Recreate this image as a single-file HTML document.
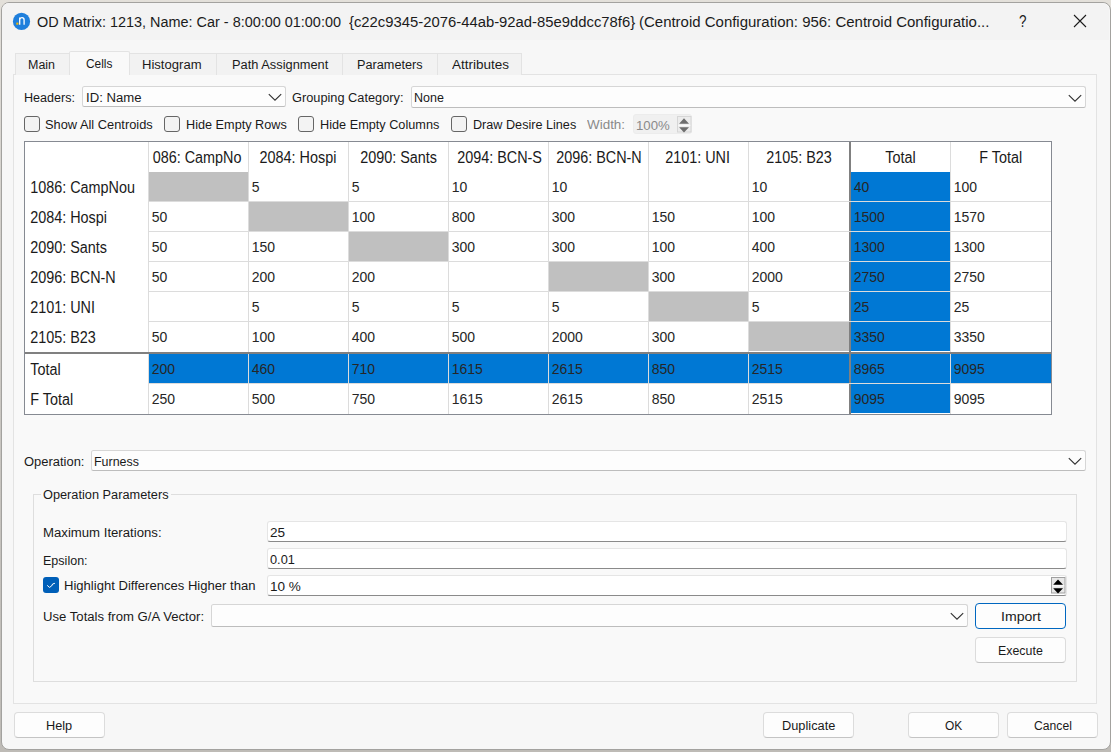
<!DOCTYPE html>
<html><head><meta charset="utf-8"><style>
html,body{margin:0;padding:0;width:1111px;height:752px;overflow:hidden;}
body{position:relative;font-family:"Liberation Sans", sans-serif;}
</style></head><body>
<div style="position:absolute;left:0;top:0;width:1111px;height:752px;background:linear-gradient(#e3e0da,#d2cfca 30%,#c8c5c0 60%,#bebbb6)"></div>
<div style="position:absolute;left:1px;top:2px;width:1108px;height:746px;border:1px solid #a3a29f;border-radius:8px;background:#f7f7f7;overflow:hidden"></div>
<div style="position:absolute;left:2px;top:3px;width:1107px;height:37px;background:#f3f3f3;border-radius:7px 7px 0 0"></div>
<svg style="position:absolute;left:12px;top:12px" width="19" height="19" viewBox="0 0 19 19"><circle cx="9.5" cy="9.4" r="8.6" fill="#1f7fdc"/><rect x="4.3" y="10.6" width="2.1" height="2.1" fill="#f5b800"/><path d="M7.7 12.7 V5.6 M7.7 7.6 Q8.4 5.7 10 5.7 Q12.1 5.7 12.1 7.9 V12.7" stroke="#fff" stroke-width="1.3" fill="none"/></svg>
<div style="position:absolute;left:36.70px;top:14.06px;font-size:14.73px;line-height:17.68px;color:#1b1b1b;white-space:pre;transform:scale(0.9803,1.000);transform-origin:0 13.94px;">OD Matrix: 1213, Name: Car - 8:00:00 01:00:00</div>
<div style="position:absolute;left:349.40px;top:14.06px;font-size:14.73px;line-height:17.68px;color:#1b1b1b;white-space:pre;transform:scale(1.0078,1.000);transform-origin:0 13.94px;">{c22c9345-2076-44ab-92ad-85e9ddcc78f6}</div>
<div style="position:absolute;left:638.80px;top:14.06px;font-size:14.73px;line-height:17.68px;color:#1b1b1b;white-space:pre;transform:scale(1.0173,1.000);transform-origin:0 13.94px;">(Centroid Configuration: 956: Centroid Configuratio...</div>
<div style="position:absolute;left:1018.80px;top:11.91px;font-size:17px;line-height:20.4px;color:#1b1b1b;white-space:pre;transform:scale(0.7911,1.000);transform-origin:0 16.09px;">?</div>
<svg style="position:absolute;left:1073px;top:14px" width="14" height="14" viewBox="0 0 14 14"><path d="M1 1 L13 13 M13 1 L1 13" stroke="#1b1b1b" stroke-width="1.1"/></svg>
<div style="position:absolute;left:13px;top:74px;width:1082px;height:628px;border:1px solid #e3e3e3;background:#f9f9f9"></div>
<div style="position:absolute;left:15px;top:53px;width:54px;height:21px;border:1px solid #e3e3e3;border-bottom:none;background:#f2f2f2"></div>
<div style="position:absolute;left:28.20px;top:57.97px;font-size:12.5px;line-height:15.0px;color:#1a1a1a;white-space:pre;transform:scale(0.9964,1.000);transform-origin:0 11.83px;">Main</div>
<div style="position:absolute;left:69px;top:51px;width:59px;height:23px;border:1px solid #e3e3e3;border-bottom:none;background:#f9f9f9;border-radius:2px 2px 0 0"></div>
<div style="position:absolute;left:85.70px;top:57.37px;font-size:12.5px;line-height:15.0px;color:#1a1a1a;white-space:pre;transform:scale(0.9516,1.000);transform-origin:0 11.83px;">Cells</div>
<div style="position:absolute;left:129px;top:53px;width:86px;height:21px;border:1px solid #e3e3e3;border-bottom:none;background:#f2f2f2"></div>
<div style="position:absolute;left:142.20px;top:57.97px;font-size:12.5px;line-height:15.0px;color:#1a1a1a;white-space:pre;transform:scale(1.0452,1.000);transform-origin:0 11.83px;">Histogram</div>
<div style="position:absolute;left:216px;top:53px;width:125px;height:21px;border:1px solid #e3e3e3;border-bottom:none;background:#f2f2f2"></div>
<div style="position:absolute;left:231.50px;top:57.97px;font-size:12.5px;line-height:15.0px;color:#1a1a1a;white-space:pre;transform:scale(1.0268,1.000);transform-origin:0 11.83px;">Path Assignment</div>
<div style="position:absolute;left:342px;top:53px;width:94px;height:21px;border:1px solid #e3e3e3;border-bottom:none;background:#f2f2f2"></div>
<div style="position:absolute;left:357.20px;top:57.97px;font-size:12.5px;line-height:15.0px;color:#1a1a1a;white-space:pre;transform:scale(1.0156,1.000);transform-origin:0 11.83px;">Parameters</div>
<div style="position:absolute;left:437px;top:53px;width:83px;height:21px;border:1px solid #e3e3e3;border-bottom:none;background:#f2f2f2"></div>
<div style="position:absolute;left:451.90px;top:57.97px;font-size:12.5px;line-height:15.0px;color:#1a1a1a;white-space:pre;transform:scale(1.0808,1.000);transform-origin:0 11.83px;">Attributes</div>
<div style="position:absolute;left:23.60px;top:90.57px;font-size:12.5px;line-height:15.0px;color:#1a1a1a;white-space:pre;transform:scale(1.0053,1.000);transform-origin:0 11.83px;">Headers:</div>
<div style="position:absolute;left:82px;top:86px;width:202px;height:19px;border:1px solid #d6d6d6;border-bottom-color:#bdbdbd;border-radius:2.5px;background:#fdfdfd"></div>
<svg style="position:absolute;left:268px;top:92.2px" width="14" height="10" viewBox="0 0 14 10"><path d="M0.8 2.2 L7 8.2 L13.2 2.2" stroke="#303030" stroke-width="1.1" fill="none"/></svg>
<div style="position:absolute;left:85.70px;top:90.57px;font-size:12.5px;line-height:15.0px;color:#1a1a1a;white-space:pre;transform:scale(1.0522,1.000);transform-origin:0 11.83px;">ID: Name</div>
<div style="position:absolute;left:291.70px;top:90.57px;font-size:12.5px;line-height:15.0px;color:#1a1a1a;white-space:pre;transform:scale(1.0223,1.000);transform-origin:0 11.83px;">Grouping Category:</div>
<div style="position:absolute;left:411px;top:86px;width:673px;height:20px;border:1px solid #d6d6d6;border-bottom-color:#bdbdbd;border-radius:2.5px;background:#fdfdfd"></div>
<svg style="position:absolute;left:1068px;top:92.7px" width="14" height="10" viewBox="0 0 14 10"><path d="M0.8 2.2 L7 8.2 L13.2 2.2" stroke="#303030" stroke-width="1.1" fill="none"/></svg>
<div style="position:absolute;left:413.80px;top:90.57px;font-size:12.5px;line-height:15.0px;color:#1a1a1a;white-space:pre;transform:scale(1.0003,1.000);transform-origin:0 11.83px;">None</div>
<div style="position:absolute;left:24px;top:116px;width:14px;height:14px;border:1px solid #666;border-radius:3px;background:#f3f3f3"></div>
<div style="position:absolute;left:45.20px;top:117.57px;font-size:12.5px;line-height:15.0px;color:#1a1a1a;white-space:pre;transform:scale(1.0267,1.000);transform-origin:0 11.83px;">Show All Centroids</div>
<div style="position:absolute;left:164px;top:116px;width:14px;height:14px;border:1px solid #666;border-radius:3px;background:#f3f3f3"></div>
<div style="position:absolute;left:185.70px;top:117.57px;font-size:12.5px;line-height:15.0px;color:#1a1a1a;white-space:pre;transform:scale(1.0148,1.000);transform-origin:0 11.83px;">Hide Empty Rows</div>
<div style="position:absolute;left:298px;top:116px;width:14px;height:14px;border:1px solid #666;border-radius:3px;background:#f3f3f3"></div>
<div style="position:absolute;left:319.80px;top:117.57px;font-size:12.5px;line-height:15.0px;color:#1a1a1a;white-space:pre;transform:scale(1.0163,1.000);transform-origin:0 11.83px;">Hide Empty Columns</div>
<div style="position:absolute;left:451px;top:116px;width:14px;height:14px;border:1px solid #666;border-radius:3px;background:#f3f3f3"></div>
<div style="position:absolute;left:472.70px;top:117.57px;font-size:12.5px;line-height:15.0px;color:#1a1a1a;white-space:pre;transform:scale(1.0106,1.000);transform-origin:0 11.83px;">Draw Desire Lines</div>
<div style="position:absolute;left:587.20px;top:117.57px;font-size:12.5px;line-height:15.0px;color:#8a8a8a;white-space:pre;transform:scale(1.0744,1.000);transform-origin:0 11.83px;">Width:</div>
<div style="position:absolute;left:633px;top:114px;width:59px;height:20px;background:#f0f0f0;border:1px solid #ececec;border-radius:3px;box-sizing:border-box"></div>
<div style="position:absolute;left:635.80px;top:118.67px;font-size:12.5px;line-height:15.0px;color:#8a8a8a;white-space:pre;transform:scale(1.0554,1.000);transform-origin:0 11.83px;">100%</div>
<svg style="position:absolute;left:676px;top:115px" width="17" height="19" viewBox="0 0 17 19"><rect x="1.5" y="1.5" width="13.5" height="15.5" fill="#ececec" stroke="#d6d6d6"/><path d="M2.2 10.4 H14.3" stroke="#fafafa" stroke-width="1.4"/><path d="M3.1 8.8 L8 3.2 L13 8.8 Z M3.1 12.2 L13 12.2 L8 17.4 Z" fill="#6e6e6e"/></svg>
<div style="position:absolute;left:24px;top:141px;width:1026px;height:272px;border:1px solid #868a92;background:#fff"></div>
<div style="position:absolute;left:149px;top:172px;width:99px;height:29px;background:#c0c0c0"></div>
<div style="position:absolute;left:851px;top:172px;width:99px;height:29px;background:#0078d4"></div>
<div style="position:absolute;left:249px;top:202px;width:99px;height:29px;background:#c0c0c0"></div>
<div style="position:absolute;left:851px;top:202px;width:99px;height:29px;background:#0078d4"></div>
<div style="position:absolute;left:349px;top:232px;width:99px;height:29px;background:#c0c0c0"></div>
<div style="position:absolute;left:851px;top:232px;width:99px;height:29px;background:#0078d4"></div>
<div style="position:absolute;left:549px;top:262px;width:99px;height:29px;background:#c0c0c0"></div>
<div style="position:absolute;left:851px;top:262px;width:99px;height:29px;background:#0078d4"></div>
<div style="position:absolute;left:649px;top:292px;width:99px;height:29px;background:#c0c0c0"></div>
<div style="position:absolute;left:851px;top:292px;width:99px;height:29px;background:#0078d4"></div>
<div style="position:absolute;left:749px;top:322px;width:100px;height:29px;background:#c0c0c0"></div>
<div style="position:absolute;left:851px;top:322px;width:99px;height:29px;background:#0078d4"></div>
<div style="position:absolute;left:149px;top:354px;width:902px;height:29px;background:#0078d4"></div>
<div style="position:absolute;left:851px;top:384px;width:99px;height:29px;background:#0078d4"></div>
<div style="position:absolute;left:148px;top:142px;width:1px;height:272px;background:#dcdcdc"></div>
<div style="position:absolute;left:248px;top:142px;width:1px;height:272px;background:#dcdcdc"></div>
<div style="position:absolute;left:348px;top:142px;width:1px;height:272px;background:#dcdcdc"></div>
<div style="position:absolute;left:448px;top:142px;width:1px;height:272px;background:#dcdcdc"></div>
<div style="position:absolute;left:548px;top:142px;width:1px;height:272px;background:#dcdcdc"></div>
<div style="position:absolute;left:648px;top:142px;width:1px;height:272px;background:#dcdcdc"></div>
<div style="position:absolute;left:748px;top:142px;width:1px;height:272px;background:#dcdcdc"></div>
<div style="position:absolute;left:950px;top:142px;width:1px;height:272px;background:#dcdcdc"></div>
<div style="position:absolute;left:849px;top:142px;width:2px;height:272px;background:#808080"></div>
<div style="position:absolute;left:149px;top:201px;width:902px;height:1px;background:#dcdcdc"></div>
<div style="position:absolute;left:149px;top:231px;width:902px;height:1px;background:#dcdcdc"></div>
<div style="position:absolute;left:149px;top:261px;width:902px;height:1px;background:#dcdcdc"></div>
<div style="position:absolute;left:149px;top:291px;width:902px;height:1px;background:#dcdcdc"></div>
<div style="position:absolute;left:149px;top:321px;width:902px;height:1px;background:#dcdcdc"></div>
<div style="position:absolute;left:149px;top:383px;width:902px;height:1px;background:#dcdcdc"></div>
<div style="position:absolute;left:25px;top:352px;width:1026px;height:2px;background:#808080"></div>
<div style="position:absolute;left:152.70px;top:149.57px;font-size:14.4px;line-height:17.28px;color:#1a1a1a;white-space:pre;transform:scale(1.0000,1.100);transform-origin:0 13.63px;">086: CampNo</div>
<div style="position:absolute;left:259.60px;top:149.57px;font-size:14.4px;line-height:17.28px;color:#1a1a1a;white-space:pre;transform:scale(1.0000,1.100);transform-origin:0 13.63px;">2084: Hospi</div>
<div style="position:absolute;left:360.20px;top:149.57px;font-size:14.4px;line-height:17.28px;color:#1a1a1a;white-space:pre;transform:scale(1.0000,1.100);transform-origin:0 13.63px;">2090: Sants</div>
<div style="position:absolute;left:457.20px;top:149.57px;font-size:14.4px;line-height:17.28px;color:#1a1a1a;white-space:pre;transform:scale(1.0000,1.100);transform-origin:0 13.63px;">2094: BCN-S</div>
<div style="position:absolute;left:556.20px;top:149.57px;font-size:14.4px;line-height:17.28px;color:#1a1a1a;white-space:pre;transform:scale(1.0000,1.100);transform-origin:0 13.63px;">2096: BCN-N</div>
<div style="position:absolute;left:665.20px;top:149.57px;font-size:14.4px;line-height:17.28px;color:#1a1a1a;white-space:pre;transform:scale(1.0000,1.100);transform-origin:0 13.63px;">2101: UNI</div>
<div style="position:absolute;left:766.20px;top:149.57px;font-size:14.4px;line-height:17.28px;color:#1a1a1a;white-space:pre;transform:scale(1.0000,1.100);transform-origin:0 13.63px;">2105: B23</div>
<div style="position:absolute;left:885.20px;top:149.57px;font-size:14.4px;line-height:17.28px;color:#1a1a1a;white-space:pre;transform:scale(1.0000,1.100);transform-origin:0 13.63px;">Total</div>
<div style="position:absolute;left:979.20px;top:149.57px;font-size:14.4px;line-height:17.28px;color:#1a1a1a;white-space:pre;transform:scale(1.0000,1.100);transform-origin:0 13.63px;">F Total</div>
<div style="position:absolute;left:30.20px;top:179.67px;font-size:14.4px;line-height:17.28px;color:#1a1a1a;white-space:pre;transform:scale(1.0000,1.100);transform-origin:0 13.63px;">1086: CampNou</div>
<div style="position:absolute;left:251.70px;top:179.05px;font-size:14px;line-height:16.8px;color:#262626;white-space:pre;transform:scale(1.0000,1.100);transform-origin:0 13.25px;">5</div>
<div style="position:absolute;left:351.70px;top:179.05px;font-size:14px;line-height:16.8px;color:#262626;white-space:pre;transform:scale(1.0000,1.100);transform-origin:0 13.25px;">5</div>
<div style="position:absolute;left:451.70px;top:179.05px;font-size:14px;line-height:16.8px;color:#262626;white-space:pre;transform:scale(1.0000,1.100);transform-origin:0 13.25px;">10</div>
<div style="position:absolute;left:551.70px;top:179.05px;font-size:14px;line-height:16.8px;color:#262626;white-space:pre;transform:scale(1.0000,1.100);transform-origin:0 13.25px;">10</div>
<div style="position:absolute;left:751.70px;top:179.05px;font-size:14px;line-height:16.8px;color:#262626;white-space:pre;transform:scale(1.0000,1.100);transform-origin:0 13.25px;">10</div>
<div style="position:absolute;left:853.70px;top:179.05px;font-size:14px;line-height:16.8px;color:#262626;white-space:pre;transform:scale(1.0000,1.100);transform-origin:0 13.25px;">40</div>
<div style="position:absolute;left:953.70px;top:179.05px;font-size:14px;line-height:16.8px;color:#262626;white-space:pre;transform:scale(1.0000,1.100);transform-origin:0 13.25px;">100</div>
<div style="position:absolute;left:30.20px;top:209.67px;font-size:14.4px;line-height:17.28px;color:#1a1a1a;white-space:pre;transform:scale(1.0000,1.100);transform-origin:0 13.63px;">2084: Hospi</div>
<div style="position:absolute;left:151.70px;top:209.05px;font-size:14px;line-height:16.8px;color:#262626;white-space:pre;transform:scale(1.0000,1.100);transform-origin:0 13.25px;">50</div>
<div style="position:absolute;left:351.70px;top:209.05px;font-size:14px;line-height:16.8px;color:#262626;white-space:pre;transform:scale(1.0000,1.100);transform-origin:0 13.25px;">100</div>
<div style="position:absolute;left:451.70px;top:209.05px;font-size:14px;line-height:16.8px;color:#262626;white-space:pre;transform:scale(1.0000,1.100);transform-origin:0 13.25px;">800</div>
<div style="position:absolute;left:551.70px;top:209.05px;font-size:14px;line-height:16.8px;color:#262626;white-space:pre;transform:scale(1.0000,1.100);transform-origin:0 13.25px;">300</div>
<div style="position:absolute;left:651.70px;top:209.05px;font-size:14px;line-height:16.8px;color:#262626;white-space:pre;transform:scale(1.0000,1.100);transform-origin:0 13.25px;">150</div>
<div style="position:absolute;left:751.70px;top:209.05px;font-size:14px;line-height:16.8px;color:#262626;white-space:pre;transform:scale(1.0000,1.100);transform-origin:0 13.25px;">100</div>
<div style="position:absolute;left:853.70px;top:209.05px;font-size:14px;line-height:16.8px;color:#262626;white-space:pre;transform:scale(1.0000,1.100);transform-origin:0 13.25px;">1500</div>
<div style="position:absolute;left:953.70px;top:209.05px;font-size:14px;line-height:16.8px;color:#262626;white-space:pre;transform:scale(1.0000,1.100);transform-origin:0 13.25px;">1570</div>
<div style="position:absolute;left:30.20px;top:239.67px;font-size:14.4px;line-height:17.28px;color:#1a1a1a;white-space:pre;transform:scale(1.0000,1.100);transform-origin:0 13.63px;">2090: Sants</div>
<div style="position:absolute;left:151.70px;top:239.05px;font-size:14px;line-height:16.8px;color:#262626;white-space:pre;transform:scale(1.0000,1.100);transform-origin:0 13.25px;">50</div>
<div style="position:absolute;left:251.70px;top:239.05px;font-size:14px;line-height:16.8px;color:#262626;white-space:pre;transform:scale(1.0000,1.100);transform-origin:0 13.25px;">150</div>
<div style="position:absolute;left:451.70px;top:239.05px;font-size:14px;line-height:16.8px;color:#262626;white-space:pre;transform:scale(1.0000,1.100);transform-origin:0 13.25px;">300</div>
<div style="position:absolute;left:551.70px;top:239.05px;font-size:14px;line-height:16.8px;color:#262626;white-space:pre;transform:scale(1.0000,1.100);transform-origin:0 13.25px;">300</div>
<div style="position:absolute;left:651.70px;top:239.05px;font-size:14px;line-height:16.8px;color:#262626;white-space:pre;transform:scale(1.0000,1.100);transform-origin:0 13.25px;">100</div>
<div style="position:absolute;left:751.70px;top:239.05px;font-size:14px;line-height:16.8px;color:#262626;white-space:pre;transform:scale(1.0000,1.100);transform-origin:0 13.25px;">400</div>
<div style="position:absolute;left:853.70px;top:239.05px;font-size:14px;line-height:16.8px;color:#262626;white-space:pre;transform:scale(1.0000,1.100);transform-origin:0 13.25px;">1300</div>
<div style="position:absolute;left:953.70px;top:239.05px;font-size:14px;line-height:16.8px;color:#262626;white-space:pre;transform:scale(1.0000,1.100);transform-origin:0 13.25px;">1300</div>
<div style="position:absolute;left:30.20px;top:269.67px;font-size:14.4px;line-height:17.28px;color:#1a1a1a;white-space:pre;transform:scale(1.0000,1.100);transform-origin:0 13.63px;">2096: BCN-N</div>
<div style="position:absolute;left:151.70px;top:269.05px;font-size:14px;line-height:16.8px;color:#262626;white-space:pre;transform:scale(1.0000,1.100);transform-origin:0 13.25px;">50</div>
<div style="position:absolute;left:251.70px;top:269.05px;font-size:14px;line-height:16.8px;color:#262626;white-space:pre;transform:scale(1.0000,1.100);transform-origin:0 13.25px;">200</div>
<div style="position:absolute;left:351.70px;top:269.05px;font-size:14px;line-height:16.8px;color:#262626;white-space:pre;transform:scale(1.0000,1.100);transform-origin:0 13.25px;">200</div>
<div style="position:absolute;left:651.70px;top:269.05px;font-size:14px;line-height:16.8px;color:#262626;white-space:pre;transform:scale(1.0000,1.100);transform-origin:0 13.25px;">300</div>
<div style="position:absolute;left:751.70px;top:269.05px;font-size:14px;line-height:16.8px;color:#262626;white-space:pre;transform:scale(1.0000,1.100);transform-origin:0 13.25px;">2000</div>
<div style="position:absolute;left:853.70px;top:269.05px;font-size:14px;line-height:16.8px;color:#262626;white-space:pre;transform:scale(1.0000,1.100);transform-origin:0 13.25px;">2750</div>
<div style="position:absolute;left:953.70px;top:269.05px;font-size:14px;line-height:16.8px;color:#262626;white-space:pre;transform:scale(1.0000,1.100);transform-origin:0 13.25px;">2750</div>
<div style="position:absolute;left:30.20px;top:299.67px;font-size:14.4px;line-height:17.28px;color:#1a1a1a;white-space:pre;transform:scale(1.0000,1.100);transform-origin:0 13.63px;">2101: UNI</div>
<div style="position:absolute;left:251.70px;top:299.05px;font-size:14px;line-height:16.8px;color:#262626;white-space:pre;transform:scale(1.0000,1.100);transform-origin:0 13.25px;">5</div>
<div style="position:absolute;left:351.70px;top:299.05px;font-size:14px;line-height:16.8px;color:#262626;white-space:pre;transform:scale(1.0000,1.100);transform-origin:0 13.25px;">5</div>
<div style="position:absolute;left:451.70px;top:299.05px;font-size:14px;line-height:16.8px;color:#262626;white-space:pre;transform:scale(1.0000,1.100);transform-origin:0 13.25px;">5</div>
<div style="position:absolute;left:551.70px;top:299.05px;font-size:14px;line-height:16.8px;color:#262626;white-space:pre;transform:scale(1.0000,1.100);transform-origin:0 13.25px;">5</div>
<div style="position:absolute;left:751.70px;top:299.05px;font-size:14px;line-height:16.8px;color:#262626;white-space:pre;transform:scale(1.0000,1.100);transform-origin:0 13.25px;">5</div>
<div style="position:absolute;left:853.70px;top:299.05px;font-size:14px;line-height:16.8px;color:#262626;white-space:pre;transform:scale(1.0000,1.100);transform-origin:0 13.25px;">25</div>
<div style="position:absolute;left:953.70px;top:299.05px;font-size:14px;line-height:16.8px;color:#262626;white-space:pre;transform:scale(1.0000,1.100);transform-origin:0 13.25px;">25</div>
<div style="position:absolute;left:30.20px;top:329.67px;font-size:14.4px;line-height:17.28px;color:#1a1a1a;white-space:pre;transform:scale(1.0000,1.100);transform-origin:0 13.63px;">2105: B23</div>
<div style="position:absolute;left:151.70px;top:329.05px;font-size:14px;line-height:16.8px;color:#262626;white-space:pre;transform:scale(1.0000,1.100);transform-origin:0 13.25px;">50</div>
<div style="position:absolute;left:251.70px;top:329.05px;font-size:14px;line-height:16.8px;color:#262626;white-space:pre;transform:scale(1.0000,1.100);transform-origin:0 13.25px;">100</div>
<div style="position:absolute;left:351.70px;top:329.05px;font-size:14px;line-height:16.8px;color:#262626;white-space:pre;transform:scale(1.0000,1.100);transform-origin:0 13.25px;">400</div>
<div style="position:absolute;left:451.70px;top:329.05px;font-size:14px;line-height:16.8px;color:#262626;white-space:pre;transform:scale(1.0000,1.100);transform-origin:0 13.25px;">500</div>
<div style="position:absolute;left:551.70px;top:329.05px;font-size:14px;line-height:16.8px;color:#262626;white-space:pre;transform:scale(1.0000,1.100);transform-origin:0 13.25px;">2000</div>
<div style="position:absolute;left:651.70px;top:329.05px;font-size:14px;line-height:16.8px;color:#262626;white-space:pre;transform:scale(1.0000,1.100);transform-origin:0 13.25px;">300</div>
<div style="position:absolute;left:853.70px;top:329.05px;font-size:14px;line-height:16.8px;color:#262626;white-space:pre;transform:scale(1.0000,1.100);transform-origin:0 13.25px;">3350</div>
<div style="position:absolute;left:953.70px;top:329.05px;font-size:14px;line-height:16.8px;color:#262626;white-space:pre;transform:scale(1.0000,1.100);transform-origin:0 13.25px;">3350</div>
<div style="position:absolute;left:30.20px;top:362.07px;font-size:14.4px;line-height:17.28px;color:#1a1a1a;white-space:pre;transform:scale(1.0000,1.100);transform-origin:0 13.63px;">Total</div>
<div style="position:absolute;left:30.20px;top:392.07px;font-size:14.4px;line-height:17.28px;color:#1a1a1a;white-space:pre;transform:scale(1.0000,1.100);transform-origin:0 13.63px;">F Total</div>
<div style="position:absolute;left:151.70px;top:361.45px;font-size:14px;line-height:16.8px;color:#262626;white-space:pre;transform:scale(1.0000,1.100);transform-origin:0 13.25px;">200</div>
<div style="position:absolute;left:151.70px;top:391.45px;font-size:14px;line-height:16.8px;color:#262626;white-space:pre;transform:scale(1.0000,1.100);transform-origin:0 13.25px;">250</div>
<div style="position:absolute;left:251.70px;top:361.45px;font-size:14px;line-height:16.8px;color:#262626;white-space:pre;transform:scale(1.0000,1.100);transform-origin:0 13.25px;">460</div>
<div style="position:absolute;left:251.70px;top:391.45px;font-size:14px;line-height:16.8px;color:#262626;white-space:pre;transform:scale(1.0000,1.100);transform-origin:0 13.25px;">500</div>
<div style="position:absolute;left:351.70px;top:361.45px;font-size:14px;line-height:16.8px;color:#262626;white-space:pre;transform:scale(1.0000,1.100);transform-origin:0 13.25px;">710</div>
<div style="position:absolute;left:351.70px;top:391.45px;font-size:14px;line-height:16.8px;color:#262626;white-space:pre;transform:scale(1.0000,1.100);transform-origin:0 13.25px;">750</div>
<div style="position:absolute;left:451.70px;top:361.45px;font-size:14px;line-height:16.8px;color:#262626;white-space:pre;transform:scale(1.0000,1.100);transform-origin:0 13.25px;">1615</div>
<div style="position:absolute;left:451.70px;top:391.45px;font-size:14px;line-height:16.8px;color:#262626;white-space:pre;transform:scale(1.0000,1.100);transform-origin:0 13.25px;">1615</div>
<div style="position:absolute;left:551.70px;top:361.45px;font-size:14px;line-height:16.8px;color:#262626;white-space:pre;transform:scale(1.0000,1.100);transform-origin:0 13.25px;">2615</div>
<div style="position:absolute;left:551.70px;top:391.45px;font-size:14px;line-height:16.8px;color:#262626;white-space:pre;transform:scale(1.0000,1.100);transform-origin:0 13.25px;">2615</div>
<div style="position:absolute;left:651.70px;top:361.45px;font-size:14px;line-height:16.8px;color:#262626;white-space:pre;transform:scale(1.0000,1.100);transform-origin:0 13.25px;">850</div>
<div style="position:absolute;left:651.70px;top:391.45px;font-size:14px;line-height:16.8px;color:#262626;white-space:pre;transform:scale(1.0000,1.100);transform-origin:0 13.25px;">850</div>
<div style="position:absolute;left:751.70px;top:361.45px;font-size:14px;line-height:16.8px;color:#262626;white-space:pre;transform:scale(1.0000,1.100);transform-origin:0 13.25px;">2515</div>
<div style="position:absolute;left:751.70px;top:391.45px;font-size:14px;line-height:16.8px;color:#262626;white-space:pre;transform:scale(1.0000,1.100);transform-origin:0 13.25px;">2515</div>
<div style="position:absolute;left:853.70px;top:361.45px;font-size:14px;line-height:16.8px;color:#262626;white-space:pre;transform:scale(1.0000,1.100);transform-origin:0 13.25px;">8965</div>
<div style="position:absolute;left:853.70px;top:391.45px;font-size:14px;line-height:16.8px;color:#262626;white-space:pre;transform:scale(1.0000,1.100);transform-origin:0 13.25px;">9095</div>
<div style="position:absolute;left:953.70px;top:361.45px;font-size:14px;line-height:16.8px;color:#262626;white-space:pre;transform:scale(1.0000,1.100);transform-origin:0 13.25px;">9095</div>
<div style="position:absolute;left:953.70px;top:391.45px;font-size:14px;line-height:16.8px;color:#262626;white-space:pre;transform:scale(1.0000,1.100);transform-origin:0 13.25px;">9095</div>
<div style="position:absolute;left:23.70px;top:454.77px;font-size:12.5px;line-height:15.0px;color:#1a1a1a;white-space:pre;transform:scale(1.0353,1.000);transform-origin:0 11.83px;">Operation:</div>
<div style="position:absolute;left:91px;top:450px;width:993px;height:19px;border:1px solid #d6d6d6;border-bottom-color:#bdbdbd;border-radius:2.5px;background:#fdfdfd"></div>
<svg style="position:absolute;left:1068px;top:456.2px" width="14" height="10" viewBox="0 0 14 10"><path d="M0.8 2.2 L7 8.2 L13.2 2.2" stroke="#303030" stroke-width="1.1" fill="none"/></svg>
<div style="position:absolute;left:94.40px;top:454.77px;font-size:12.5px;line-height:15.0px;color:#1a1a1a;white-space:pre;transform:scale(0.9942,1.000);transform-origin:0 11.83px;">Furness</div>
<div style="position:absolute;left:33px;top:494px;width:1042px;height:186px;border:1px solid #dedede"></div>
<div style="position:absolute;left:41px;top:486px;width:130px;height:14px;background:#f9f9f9"></div>
<div style="position:absolute;left:42.90px;top:487.87px;font-size:12.5px;line-height:15.0px;color:#1a1a1a;white-space:pre;transform:scale(1.0206,1.000);transform-origin:0 11.83px;">Operation Parameters</div>
<div style="position:absolute;left:42.70px;top:526.27px;font-size:12.5px;line-height:15.0px;color:#1a1a1a;white-space:pre;transform:scale(1.0535,1.000);transform-origin:0 11.83px;">Maximum Iterations:</div>
<div style="position:absolute;left:267px;top:521px;width:800px;height:21px;border:1px solid #e5e5e5;border-bottom:1px solid #8a8a8a;border-radius:3px;background:#fff;box-sizing:border-box"></div>
<div style="position:absolute;left:269.50px;top:525.77px;font-size:12.5px;line-height:15.0px;color:#1a1a1a;white-space:pre;transform:scale(1.0847,1.000);transform-origin:0 11.83px;">25</div>
<div style="position:absolute;left:42.90px;top:553.57px;font-size:12.5px;line-height:15.0px;color:#1a1a1a;white-space:pre;transform:scale(1.0027,1.000);transform-origin:0 11.83px;">Epsilon:</div>
<div style="position:absolute;left:267px;top:548px;width:800px;height:21px;border:1px solid #e5e5e5;border-bottom:1px solid #8a8a8a;border-radius:3px;background:#fff;box-sizing:border-box"></div>
<div style="position:absolute;left:269.50px;top:553.27px;font-size:12.5px;line-height:15.0px;color:#1a1a1a;white-space:pre;transform:scale(1.0195,1.000);transform-origin:0 11.83px;">0.01</div>
<div style="position:absolute;left:43px;top:577px;width:16px;height:16px;background:#005fb8;border-radius:3px"></div>
<svg style="position:absolute;left:43px;top:577px" width="16" height="16" viewBox="0 0 16 16"><path d="M4.2 8.3 L6.4 10.4 L8.6 9 L9.6 7 L11.9 6.3" stroke="#fff" stroke-width="1" fill="none"/></svg>
<div style="position:absolute;left:64.30px;top:579.17px;font-size:12.5px;line-height:15.0px;color:#1a1a1a;white-space:pre;transform:scale(1.0450,1.000);transform-origin:0 11.83px;">Highlight Differences Higher than</div>
<div style="position:absolute;left:267px;top:575px;width:800px;height:21px;border:1px solid #e5e5e5;border-bottom:1px solid #8a8a8a;border-radius:3px;background:#fff;box-sizing:border-box"></div>
<div style="position:absolute;left:269.70px;top:580.47px;font-size:12.5px;line-height:15.0px;color:#1a1a1a;white-space:pre;transform:scale(1.0836,1.000);transform-origin:0 11.83px;">10 %</div>
<svg style="position:absolute;left:1050px;top:576px" width="17" height="19" viewBox="0 0 17 19"><rect x="1.5" y="1.5" width="13.5" height="15.5" fill="#e8e8e8" stroke="#a0a0a0"/><path d="M2.2 9.8 H14.3" stroke="#fafafa" stroke-width="1.4"/><path d="M3.2 8.8 L8 3.4 L13 8.8 Z M3.2 12.2 L13 12.2 L8 17.4 Z" fill="#000"/></svg>
<div style="position:absolute;left:42.70px;top:610.07px;font-size:12.5px;line-height:15.0px;color:#1a1a1a;white-space:pre;transform:scale(1.0505,1.000);transform-origin:0 11.83px;">Use Totals from G/A Vector:</div>
<div style="position:absolute;left:211px;top:604px;width:755px;height:21px;border:1px solid #d6d6d6;border-bottom-color:#bdbdbd;border-radius:2.5px;background:#fdfdfd"></div>
<svg style="position:absolute;left:950px;top:611.2px" width="14" height="10" viewBox="0 0 14 10"><path d="M0.8 2.2 L7 8.2 L13.2 2.2" stroke="#303030" stroke-width="1.1" fill="none"/></svg>
<div style="position:absolute;left:975px;top:603px;width:91px;height:26px;border:1px solid #0067c0;border-radius:4px;background:#fdfdfd;box-sizing:border-box"></div>
<div style="position:absolute;left:1000.60px;top:610.37px;font-size:12.5px;line-height:15.0px;color:#1a1a1a;white-space:pre;transform:scale(1.1267,1.000);transform-origin:0 11.83px;">Import</div>
<div style="position:absolute;left:975px;top:637px;width:91px;height:26px;border:1px solid #dcdcdc;border-bottom-color:#c4c4c4;border-radius:4px;background:#fdfdfd;box-sizing:border-box"></div>
<div style="position:absolute;left:997.70px;top:644.17px;font-size:12.5px;line-height:15.0px;color:#1a1a1a;white-space:pre;transform:scale(0.9916,1.000);transform-origin:0 11.83px;">Execute</div>
<div style="position:absolute;left:14px;top:712px;width:91px;height:26px;border:1px solid #dcdcdc;border-bottom-color:#c4c4c4;border-radius:4px;background:#fdfdfd;box-sizing:border-box"></div>
<div style="position:absolute;left:46.20px;top:718.97px;font-size:12.5px;line-height:15.0px;color:#1a1a1a;white-space:pre;transform:scale(1.0195,1.000);transform-origin:0 11.83px;">Help</div>
<div style="position:absolute;left:763px;top:712px;width:91px;height:26px;border:1px solid #dcdcdc;border-bottom-color:#c4c4c4;border-radius:4px;background:#fdfdfd;box-sizing:border-box"></div>
<div style="position:absolute;left:781.70px;top:718.97px;font-size:12.5px;line-height:15.0px;color:#1a1a1a;white-space:pre;transform:scale(1.0230,1.000);transform-origin:0 11.83px;">Duplicate</div>
<div style="position:absolute;left:908px;top:712px;width:91px;height:26px;border:1px solid #dcdcdc;border-bottom-color:#c4c4c4;border-radius:4px;background:#fdfdfd;box-sizing:border-box"></div>
<div style="position:absolute;left:944.70px;top:718.97px;font-size:12.5px;line-height:15.0px;color:#1a1a1a;white-space:pre;transform:scale(0.9553,1.000);transform-origin:0 11.83px;">OK</div>
<div style="position:absolute;left:1007px;top:712px;width:91px;height:26px;border:1px solid #dcdcdc;border-bottom-color:#c4c4c4;border-radius:4px;background:#fdfdfd;box-sizing:border-box"></div>
<div style="position:absolute;left:1033.50px;top:718.97px;font-size:12.5px;line-height:15.0px;color:#1a1a1a;white-space:pre;transform:scale(0.9731,1.000);transform-origin:0 11.83px;">Cancel</div>
</body></html>
